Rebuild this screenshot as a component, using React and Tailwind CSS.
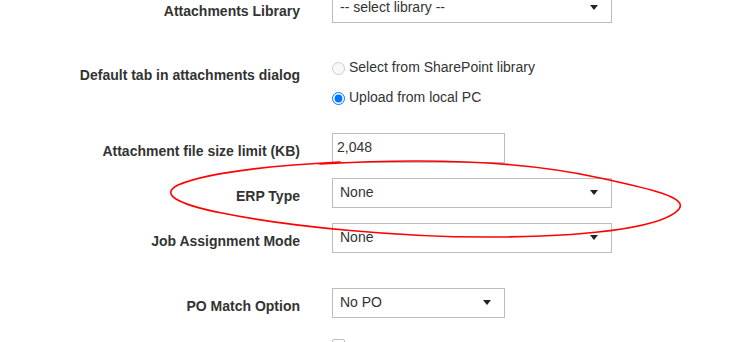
const font = { fontFamily: '"Liberation Sans", Arial, sans-serif' }

function Arrow() {
  return (
    <svg className="w-[8px] h-[5px] flex-shrink-0" viewBox="0 0 8 5">
      <path d="M0 0 L8 0 L4 5 Z" fill="#222" />
    </svg>
  )
}

function Select({ value, wide = true }) {
  return (
    <div className={`${wide ? 'w-[280px]' : 'w-[173px]'} h-[30px] border border-[#bcbcbc] bg-white flex items-center justify-between pl-[7px] pr-[13px] pb-[1px]`}>
      <span className="text-[14px] text-[#333]">{value}</span>
      <Arrow />
    </div>
  )
}

function Row({ label, children, className = '' }) {
  return (
    <div className={`flex items-center ${className}`}>
      <div className="w-[300px] text-right pt-[5px] text-[14px] leading-[20px] font-bold text-[#333]">{label}</div>
      <div className="ml-[32px]">{children}</div>
    </div>
  )
}

export default function App() {
  return (
    <div className="relative w-[745px] h-[342px] bg-white overflow-hidden" style={font}>
      <div className="flex flex-col mt-[-7px]">
        <Row label="Attachments Library" className="h-[30px]">
          <Select value="-- select library --" />
        </Row>

        <div className="flex items-start h-[60px] mt-[30px]">
          <div className="w-[300px] text-right pt-[12px] text-[14px] leading-[20px] font-bold text-[#333]">
            Default tab in attachments dialog
          </div>
          <div className="ml-[32px] flex flex-col">
            <label className="h-[30px] flex items-center gap-[4px] text-[14px] text-[#333]">
              <input type="radio" name="tab" disabled className="m-0 w-[13px] h-[13px] mt-[1px]" />
              <span className="pb-[1px]">Select from SharePoint library</span>
            </label>
            <label className="h-[30px] flex items-center gap-[4px] text-[14px] text-[#333]">
              <input type="radio" name="tab" defaultChecked className="m-0 w-[13px] h-[13px] mt-[1px]" />
              <span className="pb-[1px]">Upload from local PC</span>
            </label>
          </div>
        </div>

        <Row label="Attachment file size limit (KB)" className="h-[30px] mt-[20px]">
          <div className="w-[173px] h-[30px] border border-[#bcbcbc] flex items-center pl-[4px] pb-[2px] text-[14px] text-[#333]">
            2,048
          </div>
        </Row>

        <Row label="ERP Type" className="h-[30px] mt-[15px]">
          <Select value="None" />
        </Row>

        <Row label="Job Assignment Mode" className="h-[30px] mt-[15px]">
          <Select value="None" />
        </Row>

        <Row label="PO Match Option" className="h-[30px] mt-[35px]">
          <Select value="No PO" wide={false} />
        </Row>

        <div className="flex mt-[21px]">
          <div className="w-[300px]" />
          <div className="ml-[32px] w-[13px] h-[13px] border border-[#bcbcbc] rounded-[2px]" />
        </div>
      </div>

      <svg className="absolute inset-0 w-[745px] h-[342px] pointer-events-none" viewBox="0 0 745 342">
        <path
          d="M320 164 C420 158 520 160 600 178 C650 189 688 197 679 209 C665 226 600 236 500 237 C400 238 285 226 222 213 C176 204 160 194 178 185 C206 173 262 166 340 162"
          fill="none"
          stroke="#f00"
          strokeWidth="1.6"
          strokeLinecap="round"
        />
      </svg>
    </div>
  )
}
